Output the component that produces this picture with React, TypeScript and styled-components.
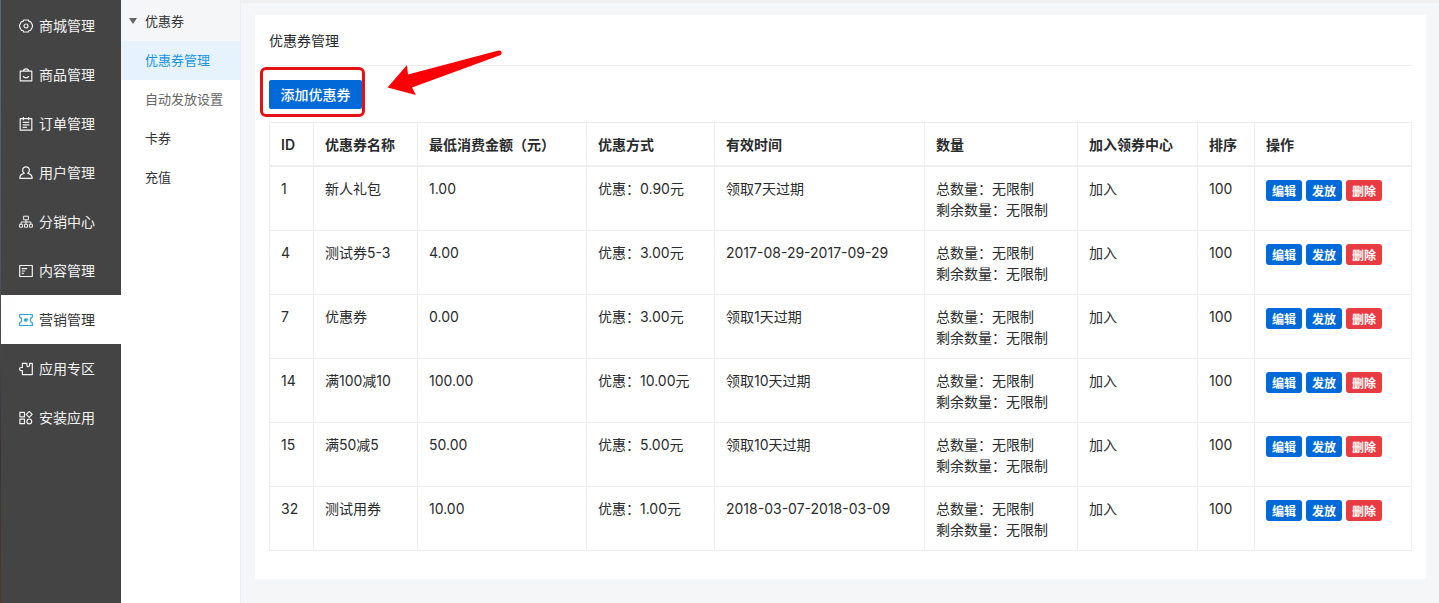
import React from 'react';
import styled, { createGlobalStyle } from 'styled-components';

const GlobalStyle = createGlobalStyle`
  *, *::before, *::after { box-sizing: border-box; }
  body {
    margin: 0;
    background: #f5f6f8;
    color: #292b2c;
    font-family: Inter, "Noto Sans CJK SC", sans-serif;
    font-size: 14px;
    line-height: 21px;
  }
  button { font-family: inherit; }
  a { color: inherit; text-decoration: none; }
`;

const Page = styled.div`
  display: flex;
  align-items: stretch;
  min-height: 100vh;
`;

const Sidebar = styled.nav`
  flex: none;
  width: 121px;
  padding: 1px 0 0 1px;
  background:
    linear-gradient(#5b6b76, #4c5560 45%, #3a3238 75%, #4d3b2c) left / 1px 100% no-repeat,
    #444;
`;

const SidebarLink = styled.a<{ $active?: boolean }>`
  display: flex;
  align-items: center;
  gap: 6px;
  height: 49px;
  padding-left: 18px;
  background: ${(p) => (p.$active ? '#fff' : 'transparent')};
  color: ${(p) => (p.$active ? '#333' : '#f2f2f2')};

  svg {
    flex: none;
    color: ${(p) => (p.$active ? '#2aa3d2' : 'inherit')};
  }
`;

const SubMenu = styled.nav`
  flex: none;
  width: 120px;
  background: #fff;
  border-right: 1px solid #ebedf0;
  font-size: 13px;
`;

const SubMenuToggle = styled.button`
  display: flex;
  align-items: center;
  gap: 8px;
  width: 100%;
  height: 41px;
  padding: 0 0 0 8px;
  border: 0;
  background: #f5f6f8;
  color: #333;
  font-size: 13px;
`;

const SubMenuLink = styled.a<{ $tone?: 'active' | 'muted' }>`
  display: flex;
  align-items: center;
  height: 39px;
  padding-left: 24px;
  background: ${(p) => (p.$tone === 'active' ? '#e6f3fd' : 'transparent')};
  color: ${(p) =>
    p.$tone === 'active' ? '#1593e6' : p.$tone === 'muted' ? '#666' : '#333'};
`;

const Main = styled.main`
  flex: 1;
  min-width: 0;
  padding: 12px 13px 24px 14px;
  border-top: 3px solid #f0f0f1;
`;

const Card = styled.section`
  padding: 0 14px 28px;
  background: #fff;
`;

const CardTitle = styled.h1`
  margin: 0;
  padding: 15px 0 14px;
  border-bottom: 1px solid #eceeef;
  font-size: 14px;
  font-weight: 400;
  line-height: 21px;
`;

const Toolbar = styled.div`
  display: flex;
  padding: 14px 0 13px;
`;

const Highlighted = styled.div`
  position: relative;
`;

const HighlightFrame = styled.span`
  position: absolute;
  inset: -13px -3px -8px -9px;
  border: 3px solid #e60f14;
  border-radius: 6px;
  pointer-events: none;
`;

const HighlightArrow = styled.svg`
  position: absolute;
  left: 117px;
  top: -31px;
  pointer-events: none;
`;

const AddButton = styled.button`
  display: block;
  height: 29px;
  min-width: 93px;
  padding: 0 11px 2px;
  border: 0;
  border-radius: 2px;
  background: #0269d9;
  color: #fff;
  font-size: 14px;
  font-weight: 500;
`;

const Table = styled.table`
  width: 100%;
  table-layout: fixed;
  border-collapse: collapse;
  border: 1px solid #eceeef;
`;

const HeadCell = styled.th`
  padding: 11px 10px 10px 11px;
  border: 1px solid #eceeef;
  border-bottom-width: 2px;
  font-weight: 600;
  text-align: left;
  white-space: nowrap;
`;

const Cell = styled.td`
  padding: 11px 10px 10px 11px;
  border: 1px solid #eceeef;
  vertical-align: top;
  white-space: nowrap;
`;

const Actions = styled.div`
  display: flex;
  gap: 4px;
  padding-top: 2px;
`;

const ActionButton = styled.button<{ $danger?: boolean }>`
  height: 21px;
  padding: 0 6px 1px;
  border: 0;
  border-radius: 3px;
  background: ${(p) => (p.$danger ? '#e93b42' : '#0269d9')};
  color: #fff;
  font-size: 12px;
  font-weight: 600;
`;

type IconProps = { children: React.ReactNode };

const Icon = ({ children }: IconProps) => (
  <svg
    width="14"
    height="14"
    viewBox="0 0 14 14"
    fill="none"
    stroke="currentColor"
    strokeWidth="1.2"
    strokeLinejoin="round"
    aria-hidden="true"
  >
    {children}
  </svg>
);

const icons = {
  mall: (
    <Icon>
      <path d="M4.700 1h4.600c.3 1.400 1 1.900 2.300 1.700L13.400 6v2l-1.800 3.300c-1.300-.2-2 .3-2.300 1.700H4.700c-.3-1.400-1-1.900-2.300-1.700L.6 8V6l1.800-3.300C3.700 2.900 4.400 2.400 4.700 1z" />
      <circle cx="7" cy="7" r="2" />
    </Icon>
  ),
  goods: (
    <Icon>
      <path d="M1.200 3.200h11.600v9.600H1.200zM4.400 3.200C4.600.2 9.400.2 9.600 3.200M4.200 8c.8 2.400 4.800 2.400 5.600 0" />
    </Icon>
  ),
  orders: (
    <Icon>
      <path d="M1.200 1.600h11.600v11.600H1.200zM4.400 0v3.200M9.600 0v3.200M3.700 5.300h6.600M3.700 7.800h6.600M3.700 10.300h4.200" />
    </Icon>
  ),
  users: (
    <Icon>
      <path d="M5.200 7.300C2.600 5.600 3.200.900 7 .900s4.400 4.700 1.800 6.400c2.700.5 4.400 1.700 4.400 5H.8c0-3.300 1.700-4.500 4.400-5z" />
    </Icon>
  ),
  distribution: (
    <Icon>
      <path d="M4.600 1.200h4.800v3.600H4.600zM7 4.800v4.500M2.100 9.300V7h9.800v2.300M.6 9.300h3v2.900h-3zM5.500 9.300h3v2.900h-3zM10.400 9.300h3v2.900h-3z" strokeWidth="1" />
    </Icon>
  ),
  content: (
    <Icon>
      <path d="M.7 1.500h12.600v11H.7zM2.800 4.600h5.400M2.800 7h3.400M2.800 9.400h2" />
    </Icon>
  ),
  marketing: (
    <Icon>
      <path d="M.7 1.500h12.600v2.600c-2.700 1-2.700 4.800 0 5.800v2.600H.7V9.900c2.700-1 2.700-4.800 0-5.800z" />
      <path d="M7 4.900v4.200M5.100 5.900l3.800 2.200M8.900 5.900L5.100 8.100" />
    </Icon>
  ),
  apps: (
    <Icon>
      <path d="M3.400 12.600h9.900V1.300h-2.700v1.800c0 2-2.800 2-2.800 0V1.300H3.400v4.200H2c-1.900 0-1.900 3.100 0 3.100h1.400z" />
    </Icon>
  ),
  install: (
    <Icon>
      <path d="M.9 1.300h4.600v4.500H.9zM.9 8.200h4.600v4.500H.9zM10.200.4l2.900 3-2.900 3-2.900-3z" />
      <circle cx="10.300" cy="10.400" r="2.400" />
    </Icon>
  ),
};

const sidebarItems: { label: string; icon: React.ReactNode; active?: boolean }[] = [
  { label: '商城管理', icon: icons.mall },
  { label: '商品管理', icon: icons.goods },
  { label: '订单管理', icon: icons.orders },
  { label: '用户管理', icon: icons.users },
  { label: '分销中心', icon: icons.distribution },
  { label: '内容管理', icon: icons.content },
  { label: '营销管理', icon: icons.marketing, active: true },
  { label: '应用专区', icon: icons.apps },
  { label: '安装应用', icon: icons.install },
];

const columns: { title: string; width?: number }[] = [
  { title: 'ID', width: 44 },
  { title: '优惠券名称', width: 104 },
  { title: '最低消费金额（元）', width: 169 },
  { title: '优惠方式', width: 128 },
  { title: '有效时间', width: 210 },
  { title: '数量', width: 153 },
  { title: '加入领券中心', width: 120 },
  { title: '排序', width: 57 },
  { title: '操作' },
];

const coupons = [
  { id: 1, name: '新人礼包', min: '1.00', off: '0.90', valid: '领取7天过期' },
  { id: 4, name: '测试券5-3', min: '4.00', off: '3.00', valid: '2017-08-29-2017-09-29' },
  { id: 7, name: '优惠券', min: '0.00', off: '3.00', valid: '领取1天过期' },
  { id: 14, name: '满100减10', min: '100.00', off: '10.00', valid: '领取10天过期' },
  { id: 15, name: '满50减5', min: '50.00', off: '5.00', valid: '领取10天过期' },
  { id: 32, name: '测试用券', min: '10.00', off: '1.00', valid: '2018-03-07-2018-03-09' },
];

export default function App() {
  return (
    <>
      <GlobalStyle />
      <Page>
        <Sidebar>
          {sidebarItems.map((item) => (
            <SidebarLink key={item.label} href="#" $active={item.active}>
              {item.icon}
              {item.label}
            </SidebarLink>
          ))}
        </Sidebar>

        <SubMenu>
          <SubMenuToggle type="button" aria-expanded="true">
            <svg width="8" height="6" viewBox="0 0 8 6" fill="#666" aria-hidden="true">
              <path d="M0 0h8L4 6z" />
            </svg>
            优惠券
          </SubMenuToggle>
          <SubMenuLink href="#" $tone="active">优惠券管理</SubMenuLink>
          <SubMenuLink href="#" $tone="muted">自动发放设置</SubMenuLink>
          <SubMenuLink href="#">卡券</SubMenuLink>
          <SubMenuLink href="#">充值</SubMenuLink>
        </SubMenu>

        <Main>
          <Card>
            <CardTitle>优惠券管理</CardTitle>
            <Toolbar>
              <Highlighted>
                <AddButton type="button">添加优惠券</AddButton>
                <HighlightFrame />
                <HighlightArrow width="118" height="50" viewBox="0 0 118 50" fill="#fb0007" aria-hidden="true">
                  <path d="M1.500 38.500L21 16l1 9.500L112.500 1.500c3-.7 4.500 3.500 1.500 4.800L26 38.500l4 7.500z" />
                </HighlightArrow>
              </Highlighted>
            </Toolbar>
            <Table>
              <colgroup>
                {columns.map((c) => (
                  <col key={c.title} width={c.width} />
                ))}
              </colgroup>
              <thead>
                <tr>
                  {columns.map((c) => (
                    <HeadCell key={c.title} scope="col">{c.title}</HeadCell>
                  ))}
                </tr>
              </thead>
              <tbody>
                {coupons.map((c) => (
                  <tr key={c.id}>
                    <Cell>{c.id}</Cell>
                    <Cell>{c.name}</Cell>
                    <Cell>{c.min}</Cell>
                    <Cell>优惠：{c.off}元</Cell>
                    <Cell>{c.valid}</Cell>
                    <Cell>
                      总数量：无限制
                      <br />
                      剩余数量：无限制
                    </Cell>
                    <Cell>加入</Cell>
                    <Cell>100</Cell>
                    <Cell>
                      <Actions>
                        <ActionButton type="button">编辑</ActionButton>
                        <ActionButton type="button">发放</ActionButton>
                        <ActionButton type="button" $danger>删除</ActionButton>
                      </Actions>
                    </Cell>
                  </tr>
                ))}
              </tbody>
            </Table>
          </Card>
        </Main>
      </Page>
    </>
  );
}
